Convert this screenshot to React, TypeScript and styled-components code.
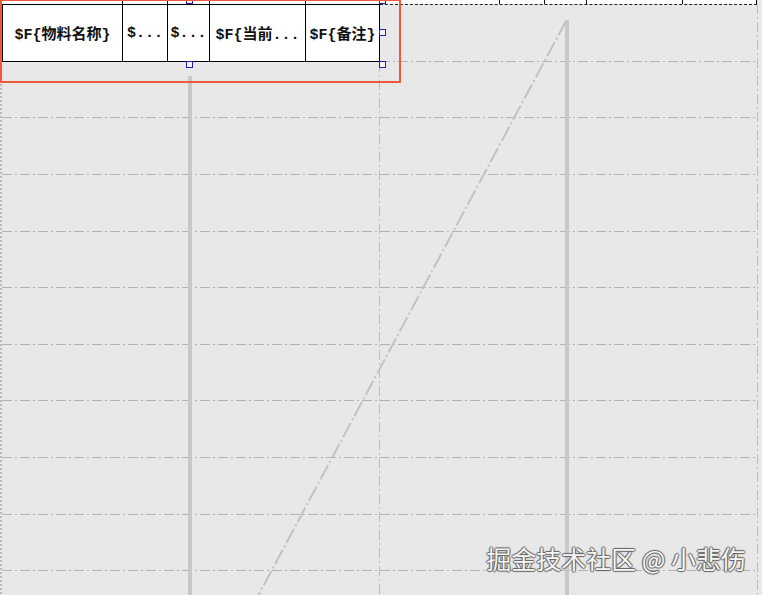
import React from 'react';
import styled, { createGlobalStyle } from 'styled-components';

const GlobalStyle = createGlobalStyle`
  html, body {
    margin: 0;
    padding: 0;
    background: #e8e8e8;
    overflow: hidden;
  }
`;

const Canvas = styled.div`
  position: relative;
  width: 762px;
  height: 595px;
  overflow: hidden;
  background: #e8e8e8;
  font-family: 'Liberation Mono', 'Noto Sans CJK SC', monospace;
`;

const GuideLayer = styled.svg`
  position: absolute;
  inset: 0;
  z-index: 0;
`;

const Band = styled.div`
  position: relative;
  z-index: 1;
  display: flex;
  flex-direction: column;
`;

const PrevBand = styled.div`
  display: flex;
  height: 4px;
  width: 757px;
  padding-left: 3px;
  box-sizing: border-box;
  background: #fff;
`;

const StubCell = styled.div<{ $w: number }>`
  width: ${p => p.$w}px;
  flex: none;
  box-sizing: border-box;
  border-right: 1px solid #111;
`;

const DetailRow = styled.div`
  position: relative;
  display: flex;
  margin-left: 2px;
`;

const Table = styled.div`
  display: flex;
  height: 58px;
  box-sizing: border-box;
  border: 1px solid #000;
  border-right: none;
  background: #fff;
`;

const Cell = styled.div<{ $w: number }>`
  width: ${p => p.$w}px;
  flex: none;
  box-sizing: border-box;
  border-right: 1px solid #000;
  display: flex;
  align-items: center;
  justify-content: center;
  font-size: 15px;
  font-weight: bold;
  color: #111;
  white-space: nowrap;
  overflow: hidden;
`;

const EmptyColumn = styled.div`
  width: 377px;
  height: 0;
  border-top: 1px dashed #222;
`;

/* selection frame around the detail row, handles sit on its edges */
const Selection = styled.div`
  position: absolute;
  left: -6px;
  top: -4px;
  width: 386px;
  height: 64px;
  pointer-events: none;
  z-index: 3;
`;

const Handle = styled.div<{ $h: 'center' | 'right'; $v: 'top' | 'middle' | 'bottom' }>`
  position: absolute;
  width: 7px;
  height: 7px;
  margin: -3px 0 0 -3px;
  box-sizing: border-box;
  border: 1px solid #1e1ec0;
  background: #f4f4f4;
  left: ${p => (p.$h === 'center' ? '50%' : '100%')};
  top: ${p => (p.$v === 'top' ? '0%' : p.$v === 'middle' ? '50%' : '100%')};
`;

const Highlight = styled.div`
  position: absolute;
  left: 0;
  top: -1px;
  width: 401px;
  height: 84px;
  box-sizing: border-box;
  border: 2px solid #ef5a3c;
  z-index: 2;
  pointer-events: none;
`;

const Watermark = styled.div`
  position: absolute;
  right: 16px;
  bottom: 22px;
  z-index: 4;
  font-family: 'Noto Sans CJK SC', sans-serif;
  font-size: 25px;
  line-height: 30px;
  color: #f6f6f6;
  text-shadow: -1px 0 1px #5e5e5e, 1px 0 1px #5e5e5e, 0 1px 1px #5e5e5e, 0 -1px 1px #5e5e5e;
  white-space: nowrap;
`;

const widths = [120, 45, 42, 96, 74];
const fields = ['$F{物料名称}', '$...', '$...', '$F{当前...', '$F{备注}'];

const rowYs = Array.from({ length: 10 }, (_, k) => 60.8 + 56.6 * k);

const Guides: React.FC = () => (
  <GuideLayer width={762} height={595} viewBox="0 0 762 595">
    {rowYs.map(y => (
      <line key={y} x1={2} x2={757} y1={Math.round(y) + 0.5} y2={Math.round(y) + 0.5}
        stroke="#b2b2b2" strokeWidth={1} strokeDasharray="10 3 2 3" />
    ))}
    <line x1={379.5} x2={379.5} y1={62} y2={595} stroke="#bcbcbc" strokeWidth={1} strokeDasharray="10 3 2 3" />
    <line x1={757.5} x2={757.5} y1={4} y2={595} stroke="#bcbcbc" strokeWidth={1} strokeDasharray="10 3 2 3" />
    <line x1={1} x2={1} y1={0} y2={595} stroke="#8a8a8a" strokeWidth={1} strokeDasharray="2 2" />
    <rect x={188} y={76} width={4} height={519} fill="#c8c8c8" />
    <rect x={565} y={20} width={4} height={575} fill="#c8c8c8" />
    <line x1={566} y1={21} x2={258} y2={596} stroke="#c2c2c2" strokeWidth={2} strokeDasharray="16 3 2 3" />
  </GuideLayer>
);

export default function App() {
  return (
    <>
      <GlobalStyle />
      <Canvas>
        <Guides />
        <Band>
          <PrevBand>
            {[...widths, ...widths].map((w, i) => (
              <StubCell key={i} $w={w} />
            ))}
          </PrevBand>
          <DetailRow>
            <Table>
              {fields.map((f, i) => (
                <Cell key={i} $w={widths[i]}>{f}</Cell>
              ))}
            </Table>
            <EmptyColumn />
            <Selection>
              <Handle $h="center" $v="top" />
              <Handle $h="right" $v="top" />
              <Handle $h="right" $v="middle" />
              <Handle $h="center" $v="bottom" />
              <Handle $h="right" $v="bottom" />
            </Selection>
          </DetailRow>
        </Band>
        <Highlight />
        <Watermark>掘金技术社区 @ 小悲伤</Watermark>
      </Canvas>
    </>
  );
}
